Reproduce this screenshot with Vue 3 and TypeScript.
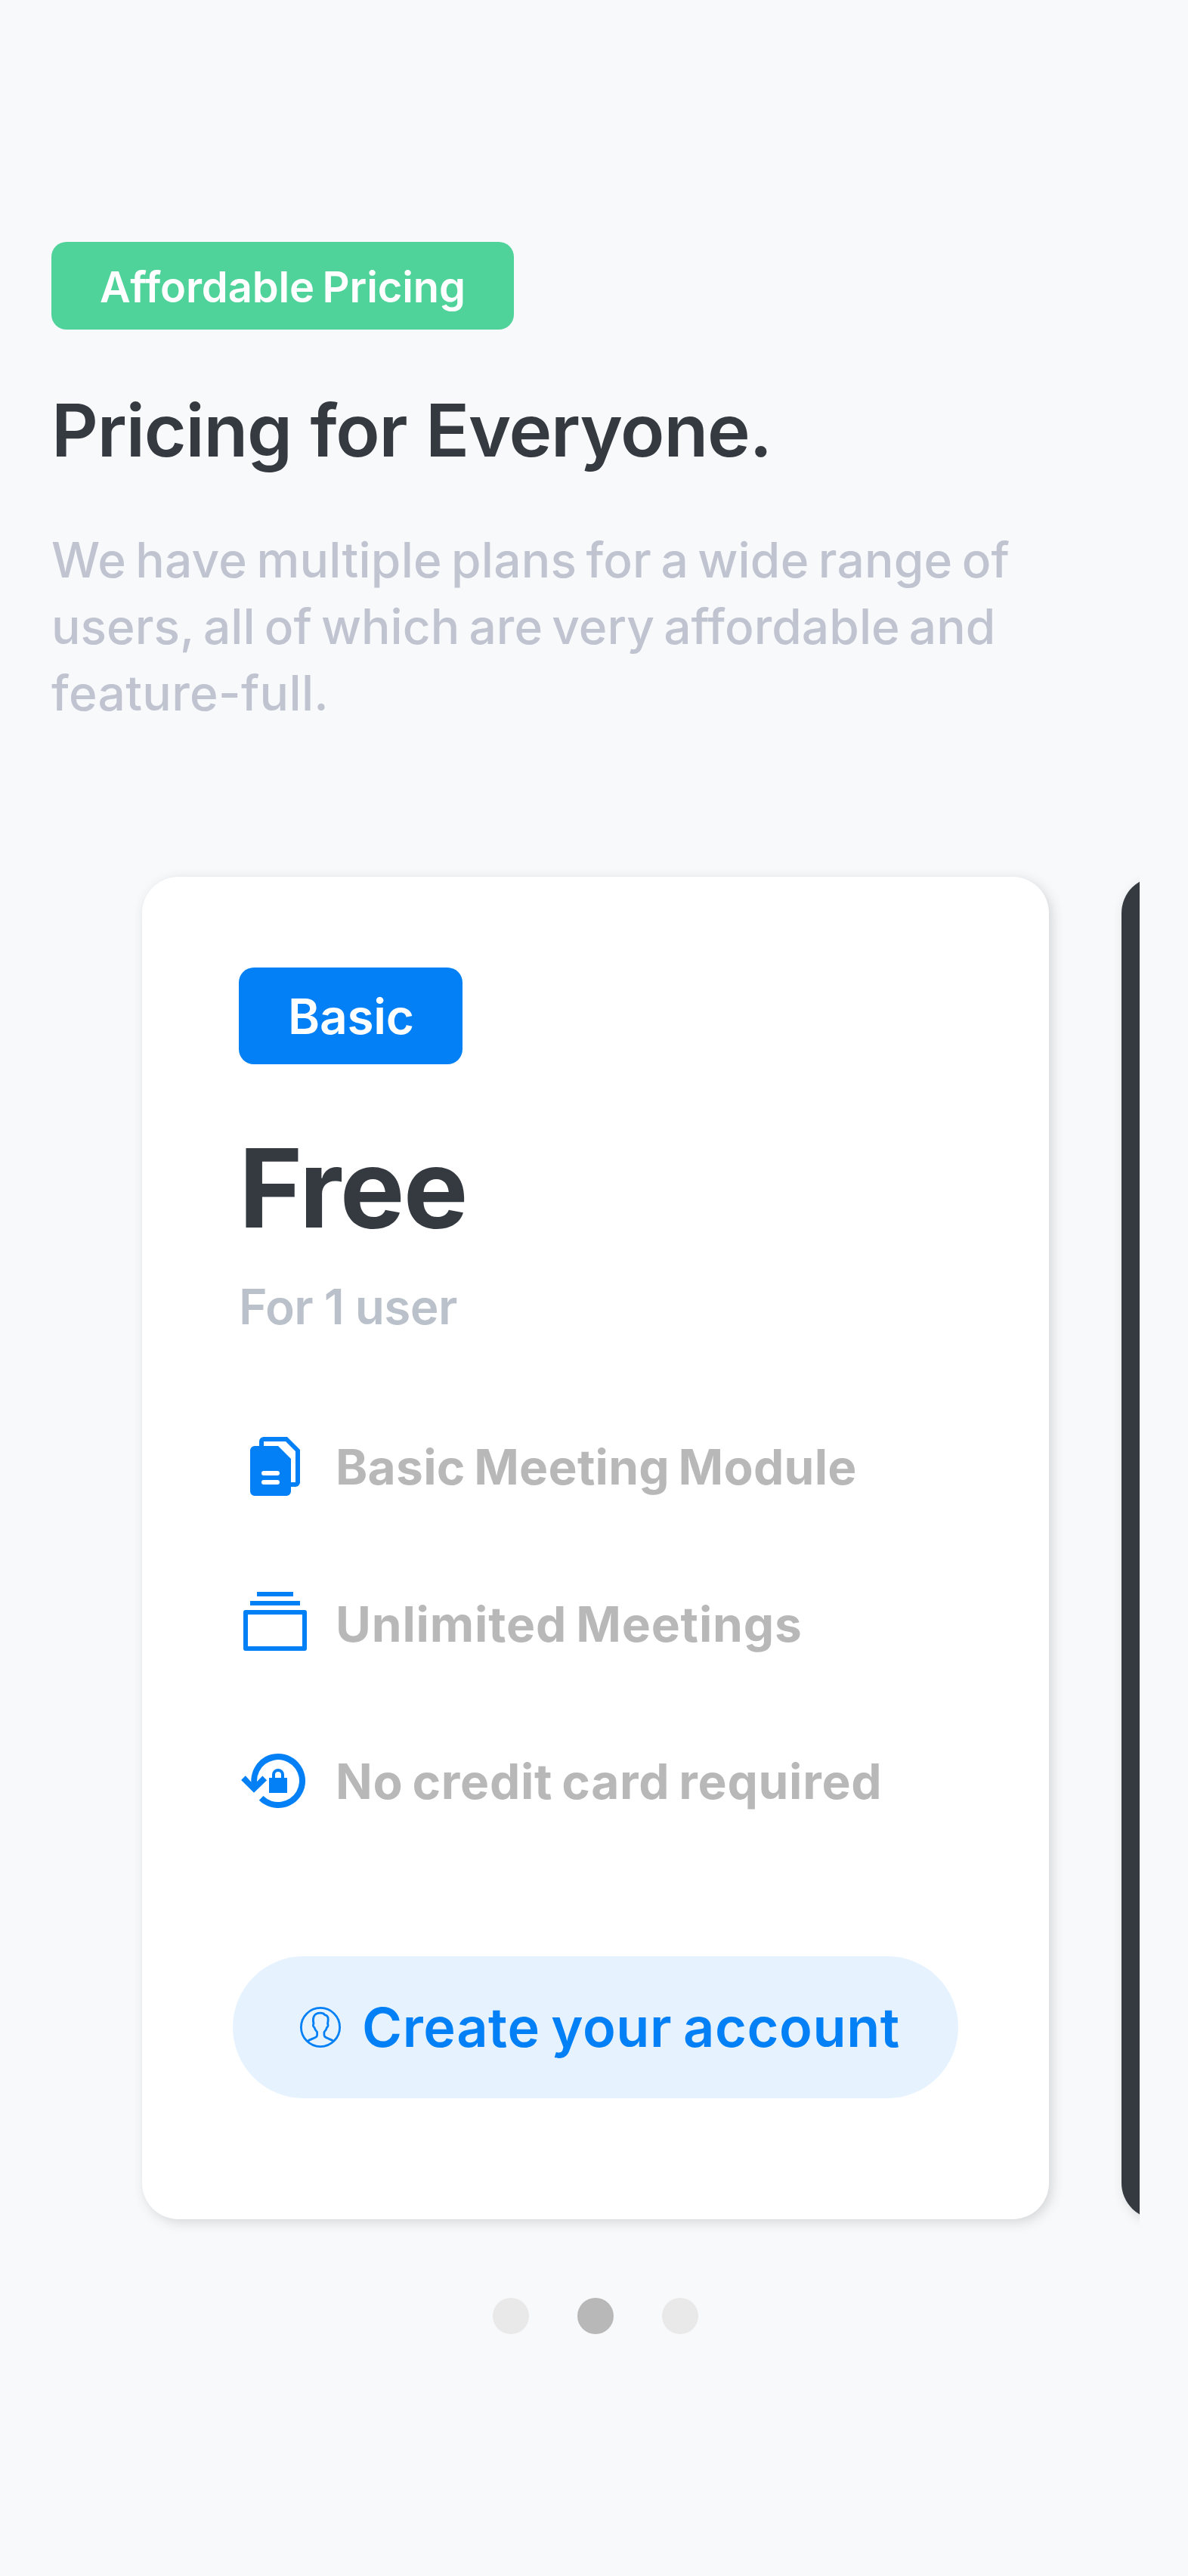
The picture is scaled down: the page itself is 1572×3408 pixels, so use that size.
<script setup lang="ts">
interface Line {
  text: string
  tracking: string
}

interface Feature extends Line {
  icon: 'files' | 'stack' | 'lock'
}

const intro: Line[] = [
  { text: 'We have multiple plans for a wide range of', tracking: '0.22px' },
  { text: 'users, all of which are very affordable and', tracking: '0.05px' },
  { text: 'feature-full.', tracking: '0.35px' },
]

const features: Feature[] = [
  { icon: 'files', text: 'Basic Meeting Module', tracking: '0.28px' },
  { icon: 'stack', text: 'Unlimited Meetings', tracking: '0.86px' },
  { icon: 'lock', text: 'No credit card required', tracking: '0.74px' },
]

const slides = 3
const activeSlide = 2
</script>

<template>
  <main class="page">
    <header class="intro">
      <span class="tag">Affordable Pricing</span>
      <h1 class="title">Pricing for Everyone.</h1>
      <p class="lead">
        <span
          v-for="line in intro"
          :key="line.text"
          class="lead-line"
          :style="{ letterSpacing: line.tracking }"
        >{{ line.text }}</span>
      </p>
    </header>

    <section class="carousel">
      <article class="card">
        <span class="plan">Basic</span>
        <h2 class="price">Free</h2>
        <p class="seats">For 1 user</p>

        <ul class="features">
          <li v-for="feature in features" :key="feature.text" class="feature">
            <svg v-if="feature.icon === 'files'" class="icon" viewBox="0 0 96 96">
              <path
                d="M27 21V15a6 6 0 0 1 6-6H64L81 26V69a6 6 0 0 1-6 6H69V69H75V28L62 15H33V21Z"
              />
              <path
                fill-rule="evenodd"
                d="M21 21H52L69 38V81a6 6 0 0 1-6 6H21a6 6 0 0 1-6-6V27a6 6 0 0 1 6-6ZM33 54a3 3 0 0 0 0 6H51a3 3 0 0 0 0-6ZM33 66a3 3 0 0 0 0 6H51a3 3 0 0 0 0-6Z"
              />
            </svg>
            <svg v-else-if="feature.icon === 'stack'" class="icon" viewBox="0 0 96 96">
              <path d="M24 6H72V12H24ZM15 18H81V24H15Z" />
              <path
                fill-rule="evenodd"
                d="M9 30H87a3 3 0 0 1 3 3V81a3 3 0 0 1-3 3H9a3 3 0 0 1-3-3V33a3 3 0 0 1 3-3ZM12 36V78H84V36Z"
              />
            </svg>
            <svg v-else class="icon" viewBox="0 0 96 96">
              <path
                d="M16.3 49.5C16.3 28 32 12 52 12a36 36 0 1 1-25.2 61.7l5.6-5.6A28 28 0 1 0 24 48v1l7.4-7.4 5.7 5.7L20 63.8 3.1 46.9l5.7-5.7Z"
              />
              <path
                fill-rule="evenodd"
                d="M40 44H44V40a8 8 0 0 1 16 0V44H64V64H40ZM48 44H56V40a4 4 0 0 0-8 0Z"
              />
            </svg>
            <span :style="{ letterSpacing: feature.tracking }">{{ feature.text }}</span>
          </li>
        </ul>

        <button class="cta" type="button">
          <svg class="avatar" viewBox="0 0 54 54">
            <circle cx="27" cy="27" r="25.6" />
            <path
              d="M9.7 45.5C13 43 20 41.5 22 39.3C23.2 38 22.6 35.5 22.6 33.3C20.5 31.5 19.6 29.5 18.9 27.2C17.4 26.5 16.8 23.5 18 22.6C17.3 19.5 17.2 15.5 18.2 13C19.7 9.3 23.5 8.2 27 8.2C30 8.2 31.8 9 32.6 10.6C36 11 37.2 13.5 37.2 16.5C37.2 18.7 36.8 20.8 36.5 22.6C37.7 23.5 37.1 26.5 35.6 27.2C35 29.5 34 31.5 32 33.3C32 35.5 31.4 38 32.6 39.3C34.6 41.5 41 43 44.5 45.3"
            />
          </svg>
          <span>Create your account</span>
        </button>
      </article>

      <article class="card card-dark"></article>
    </section>

    <nav class="dots">
      <span
        v-for="n in slides"
        :key="n"
        class="dot"
        :class="{ active: n === activeSlide }"
      ></span>
    </nav>
  </main>
</template>

<style>
body {
  background: #f8f9fb;
}
</style>

<style scoped>
.page {
  box-sizing: border-box;
  display: flex;
  flex-direction: column;
  width: 1572px;
  height: 3408px;
  padding-top: 320px;
  overflow: hidden;
  background: #f8f9fb;
  font-family: Inter, 'Noto Sans', sans-serif;
  font-weight: 600;
}

h1,
h2,
p,
ul {
  margin: 0;
  padding: 0;
}

.intro {
  display: flex;
  flex-direction: column;
  align-items: flex-start;
  padding-left: 68px;
}

.tag {
  box-sizing: border-box;
  width: 612px;
  height: 116px;
  padding: 4px 0 0 64px;
  border-radius: 20px;
  background: #50d39a;
  color: #fff;
  font-size: 56px;
  line-height: 112px;
  letter-spacing: -0.12px;
  word-spacing: -3.5px;
  white-space: nowrap;
}

.title {
  margin-top: 68px;
  color: #353a41;
  font-size: 96px;
  font-weight: 600;
  line-height: 131px;
  letter-spacing: -1.15px;
  word-spacing: 1.5px;
  white-space: nowrap;
}

.lead {
  margin-top: 62px;
  color: #c0c4d1;
  font-size: 64px;
  font-weight: 500;
  line-height: 88px;
  word-spacing: -5px;
}

.lead-line {
  display: block;
  white-space: nowrap;
}

.carousel {
  display: flex;
  gap: 96px;
  width: 1508px;
  box-sizing: border-box;
  margin-top: 99px;
  padding: 100px 0 80px 188px;
  overflow: hidden;
}

.card {
  box-sizing: border-box;
  display: flex;
  flex: none;
  flex-direction: column;
  align-items: flex-start;
  width: 1200px;
  height: 1776px;
  padding: 120px 120px 0 128px;
  border-radius: 48px;
  background: #fff;
  box-shadow: 4px 4px 16px rgba(46, 53, 46, 0.18);
}

.card-dark {
  background: #353a41;
}

.plan {
  box-sizing: border-box;
  width: 296px;
  height: 128px;
  padding: 1px 0 0 65px;
  border-radius: 20px;
  background: #0380f5;
  color: #fff;
  font-size: 64px;
  line-height: 128px;
  letter-spacing: -0.28px;
}

.price {
  margin-top: 66px;
  color: #353a41;
  font-size: 144px;
  font-weight: 700;
  line-height: 196px;
  letter-spacing: -1.6px;
}

.seats {
  margin-top: 15px;
  color: #bac1ca;
  font-size: 64px;
  line-height: 88px;
  letter-spacing: -0.6px;
  word-spacing: -1px;
}

.features {
  display: flex;
  flex-direction: column;
  gap: 112px;
  margin-top: 119px;
  list-style: none;
}

.feature {
  display: flex;
  align-items: center;
  gap: 32px;
  height: 96px;
  color: #b8b8b8;
  font-size: 64px;
  font-weight: 700;
  line-height: 96px;
  word-spacing: -4px;
  white-space: nowrap;
}

.feature span {
  padding-top: 2px;
}

.icon {
  flex: none;
  width: 96px;
  height: 96px;
  fill: #0380f5;
}

.cta {
  box-sizing: border-box;
  display: flex;
  align-items: center;
  gap: 28px;
  width: 960px;
  height: 188px;
  margin: 184px 0 0 -8px;
  padding: 0 0 0 89px;
  border: 0;
  border-radius: 94px;
  background: #e6f3ff;
  color: #0380f5;
  font: inherit;
  font-size: 72px;
  line-height: 98px;
  letter-spacing: 0.6px;
  word-spacing: -4px;
  white-space: nowrap;
}

.avatar {
  flex: none;
  width: 54px;
  height: 54px;
  fill: none;
  stroke: #0380f5;
  stroke-width: 2.8;
  stroke-linejoin: round;
}

.dots {
  display: flex;
  gap: 64px;
  margin: 24px 0 0 652px;
}

.dot {
  width: 48px;
  height: 48px;
  border-radius: 50%;
  background: #e9e9e9;
}

.dot.active {
  background: #b8b8b8;
}
</style>
